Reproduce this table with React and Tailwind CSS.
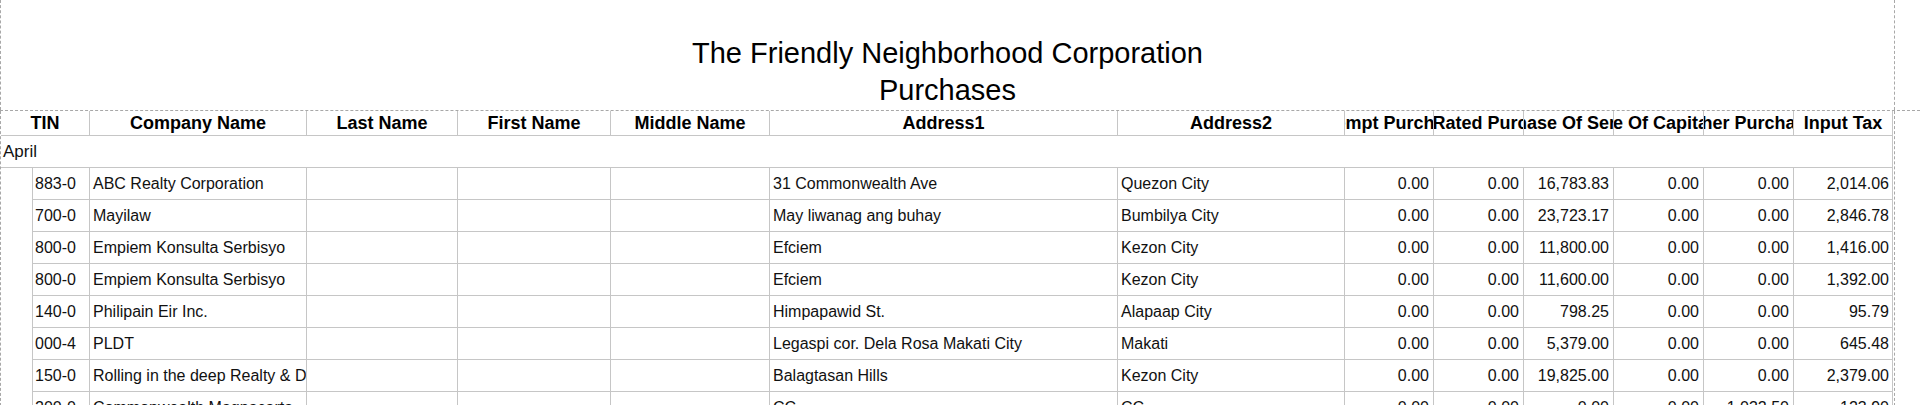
import React from 'react';

const cols = [
  { key: 'tin', label: 'TIN', w: 'w-[89px]' },
  { key: 'company', label: 'Company Name', w: 'w-[217px]' },
  { key: 'last', label: 'Last Name', w: 'w-[151px]' },
  { key: 'first', label: 'First Name', w: 'w-[153px]' },
  { key: 'middle', label: 'Middle Name', w: 'w-[159px]' },
  { key: 'addr1', label: 'Address1', w: 'w-[348px]' },
  { key: 'addr2', label: 'Address2', w: 'w-[227px]' },
  { key: 'exempt', label: 'Exempt Purchase', w: 'w-[89px]' },
  { key: 'zero', label: 'Zero Rated Purchase', w: 'w-[90px]' },
  { key: 'services', label: 'Purchase Of Services', w: 'w-[90px]' },
  { key: 'capital', label: 'Purchase Of Capital Goods', w: 'w-[90px]' },
  { key: 'other', label: 'Other Purchase', w: 'w-[90px]' },
  { key: 'tax', label: 'Input Tax', w: 'w-[99px]' },
];

const rows = [
  ['883-0', 'ABC Realty Corporation', '31 Commonwealth Ave', 'Quezon City', '0.00', '0.00', '16,783.83', '0.00', '0.00', '2,014.06'],
  ['700-0', 'Mayilaw', 'May liwanag ang buhay', 'Bumbilya City', '0.00', '0.00', '23,723.17', '0.00', '0.00', '2,846.78'],
  ['800-0', 'Empiem Konsulta Serbisyo', 'Efciem', 'Kezon City', '0.00', '0.00', '11,800.00', '0.00', '0.00', '1,416.00'],
  ['800-0', 'Empiem Konsulta Serbisyo', 'Efciem', 'Kezon City', '0.00', '0.00', '11,600.00', '0.00', '0.00', '1,392.00'],
  ['140-0', 'Philipain Eir Inc.', 'Himpapawid St.', 'Alapaap City', '0.00', '0.00', '798.25', '0.00', '0.00', '95.79'],
  ['000-4', 'PLDT', 'Legaspi cor. Dela Rosa Makati City', 'Makati', '0.00', '0.00', '5,379.00', '0.00', '0.00', '645.48'],
  ['150-0', 'Rolling in the deep Realty & Development', 'Balagtasan Hills', 'Kezon City', '0.00', '0.00', '19,825.00', '0.00', '0.00', '2,379.00'],
  ['200-0', 'Commonwealth Magnacarta', 'CC', 'CC', '0.00', '0.00', '0.00', '0.00', '1,032.50', '123.90'],
];

function Cell({ className = '', children }) {
  return (
    <div className={`h-full shrink-0 border-r border-[#c6c6c6] flex items-center overflow-hidden whitespace-nowrap ${className}`}>
      {children}
    </div>
  );
}

function DataRow({ r }) {
  const [tin, company, addr1, addr2, ...nums] = r;
  return (
    <div className="flex h-[32px]">
      <div className="w-[31px] shrink-0" />
      <div className="flex h-[32px] border-b border-l border-[#c6c6c6]">
        <Cell className="w-[57px] px-[2px]">{tin}</Cell>
        <Cell className="w-[217px] px-[3px]">{company}</Cell>
        <Cell className="w-[151px]" />
        <Cell className="w-[153px]" />
        <Cell className="w-[159px]" />
        <Cell className="w-[348px] px-[3px]">{addr1}</Cell>
        <Cell className="w-[227px] px-[3px]">{addr2}</Cell>
        <Cell className="w-[89px] justify-end px-[4px]">{nums[0]}</Cell>
        <Cell className="w-[90px] justify-end px-[4px]">{nums[1]}</Cell>
        <Cell className="w-[90px] justify-end px-[4px]">{nums[2]}</Cell>
        <Cell className="w-[90px] justify-end px-[4px]">{nums[3]}</Cell>
        <Cell className="w-[90px] justify-end px-[4px]">{nums[4]}</Cell>
        <Cell className="w-[99px] justify-end px-[3px]">{nums[5]}</Cell>
      </div>
    </div>
  );
}

export default function App() {
  return (
    <div className="w-[1920px] h-[405px] overflow-hidden bg-white text-[#111] font-['Liberation_Sans',Arial,sans-serif]">
      <div className="w-[1895px] h-[110px] border-x border-dashed border-[#a8a8a8] pt-[35px] text-center text-[29px] text-black">
        <div className="h-[37px] leading-[37px]">The Friendly Neighborhood Corporation</div>
        <div className="h-[37px] leading-[37px]">Purchases</div>
      </div>
      <div className="w-full h-px border-t border-dashed border-[#a8a8a8]" />
      <div className="w-[1895px] h-[295px] border-x border-dashed border-[#a8a8a8] text-[16px]">
        <div className="w-[1892px]">
          <div className="flex h-[25px] border-b border-[#c6c6c6] font-bold text-[18px] text-black">
            {cols.map((c) => (
              <Cell key={c.key} className={`${c.w} justify-center`}>{c.label}</Cell>
            ))}
          </div>
          <div className="h-[32px] border-b border-r border-[#c6c6c6] flex items-center px-[2px] text-[17px]">April</div>
          {rows.map((r, i) => (
            <DataRow key={i} r={r} />
          ))}
        </div>
      </div>
    </div>
  );
}
